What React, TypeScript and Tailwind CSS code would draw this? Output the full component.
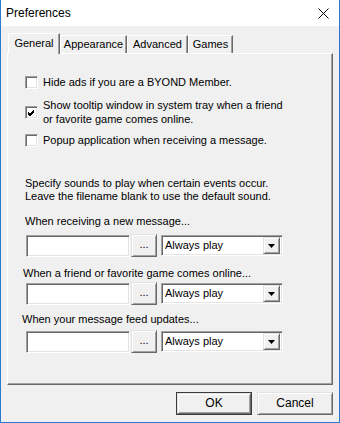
import React from "react";

const sunken =
  "border border-t-[#a0a0a0] border-l-[#a0a0a0] border-b-white border-r-white shadow-[inset_1px_1px_0_#696969,inset_-1px_-1px_0_#e3e3e3]";
const raised =
  "border border-t-[#e3e3e3] border-l-[#e3e3e3] border-b-[#696969] border-r-[#696969] shadow-[inset_1px_1px_0_#ffffff,inset_-1px_-1px_0_#a0a0a0] bg-[#f0f0f0]";

function Checkbox({ checked }: { checked?: boolean }) {
  return (
    <div className={`w-[13px] h-[13px] bg-white shrink-0 ${sunken} flex items-center justify-center`}>
      {checked && (
        <svg width="9" height="9" viewBox="0 0 9 9">
          <path d="M1 4 L3 6 L7 2 M1 5 L3 7 L7 3 M1 6 L3 8 L7 4" stroke="#000" strokeWidth="1" fill="none" />
        </svg>
      )}
    </div>
  );
}

function SoundRow({ mt }: { mt: string }) {
  return (
    <div className={`flex items-center ml-[18px] ${mt}`}>
      <div className={`w-[104px] h-[22px] bg-white ${sunken}`} />
      <div className={`ml-[1px] w-[26px] h-[23px] ${raised} flex items-center justify-center text-[11px] leading-none pb-[3px]`}>
        ...
      </div>
      <div className={`ml-[4px] w-[122px] h-[21px] bg-white ${sunken} flex items-center justify-between pl-[3px] pr-[2px]`}>
        <span className="text-[11px] leading-[13px]">Always play</span>
        <div className={`w-[17px] h-[17px] ${raised} flex items-center justify-center`}>
          <svg width="7" height="4" viewBox="0 0 7 4">
            <path d="M0 0 H7 L3.5 4 Z" fill="#000" />
          </svg>
        </div>
      </div>
    </div>
  );
}

export default function App() {
  const tabs = [
    { label: "General", w: "w-[52px]", sel: true },
    { label: "Appearance", w: "w-[67px]" },
    { label: "Advanced", w: "w-[61px]" },
    { label: "Games", w: "w-[45px]" },
  ];
  return (
    <div className="w-[340px] h-[423px] flex flex-col bg-[#f0f0f0] font-['Liberation_Sans',Arial,sans-serif] text-[11px] leading-[13px] text-black relative overflow-hidden">
      {/* Title bar */}
      <div className="h-[26px] bg-white flex items-center justify-between pl-[5px] pr-[10px] border-x border-[#2b79d0]">
        <span className="text-[12px] leading-[14px]">Preferences</span>
        <svg width="11" height="11" viewBox="0 0 11 11">
          <path d="M0.5 0.5 L10.5 10.5 M10.5 0.5 L0.5 10.5" stroke="#000" strokeWidth="1" />
        </svg>
      </div>
      {/* Body */}
      <div className="flex-1 flex flex-col border-x border-b border-[#2b79d0] px-[6px] pt-[7px]">
        {/* Tabs */}
        <div className="flex items-end h-[20px] pl-[1px]">
          {tabs.map((t) =>
            t.sel ? (
              <div
                key={t.label}
                className={`${t.w} h-[21px] mb-[-1px] relative z-10 bg-[#f0f0f0] border-t border-l border-t-white border-l-white border-r border-r-[#696969] shadow-[inset_-1px_0_0_#a0a0a0] flex items-center justify-center pb-[2px]`}
              >
                {t.label}
              </div>
            ) : (
              <div
                key={t.label}
                className={`${t.w} h-[18px] border-t border-l border-t-white border-l-white border-r border-r-[#696969] shadow-[inset_-1px_0_0_#a0a0a0] flex items-center justify-center`}
              >
                {t.label}
              </div>
            )
          )}
        </div>
        {/* Panel */}
        <div className="h-[332px] border border-t-white border-l-white border-r-[#696969] border-b-[#696969] shadow-[inset_-1px_-1px_0_#a0a0a0] flex flex-col">
          <div className="flex items-center ml-[17px] mt-[22px] h-[13px]">
            <Checkbox />
            <span className="ml-[5px]">Hide ads if you are a BYOND Member.</span>
          </div>
          <div className="flex items-center ml-[17px] mt-[9px]">
            <Checkbox checked />
            <span className="ml-[5px] leading-[14px]">
              Show tooltip window in system tray when a friend
              <br />
              or favorite game comes online.
            </span>
          </div>
          <div className="flex items-center ml-[17px] mt-[8px] h-[13px]">
            <Checkbox />
            <span className="ml-[5px]">Popup application when receiving a message.</span>
          </div>
          <div className="ml-[17px] mt-[30px]">
            Specify sounds to play when certain events occur.
            <br />
            Leave the filename blank to use the default sound.
          </div>
          <div className="ml-[17px] mt-[12px]">When receiving a new message...</div>
          <SoundRow mt="mt-[6px]" />
          <div className="ml-[15px] mt-[10px]">When a friend or favorite game comes online...</div>
          <SoundRow mt="mt-[2px]" />
          <div className="ml-[14px] mt-[8px]">When your message feed updates...</div>
          <SoundRow mt="mt-[4px]" />
        </div>
        {/* Buttons */}
        <div className="flex justify-end gap-[5px] mt-[7px]">
          <div className="w-[76px] h-[23px] border border-[#3c3c3c] flex">
            <div className={`flex-1 ${raised} flex items-center justify-center text-[12px]`}>OK</div>
          </div>
          <div className={`w-[76px] h-[23px] ${raised} flex items-center justify-center text-[12px]`}>Cancel</div>
        </div>
      </div>
    </div>
  );
}
